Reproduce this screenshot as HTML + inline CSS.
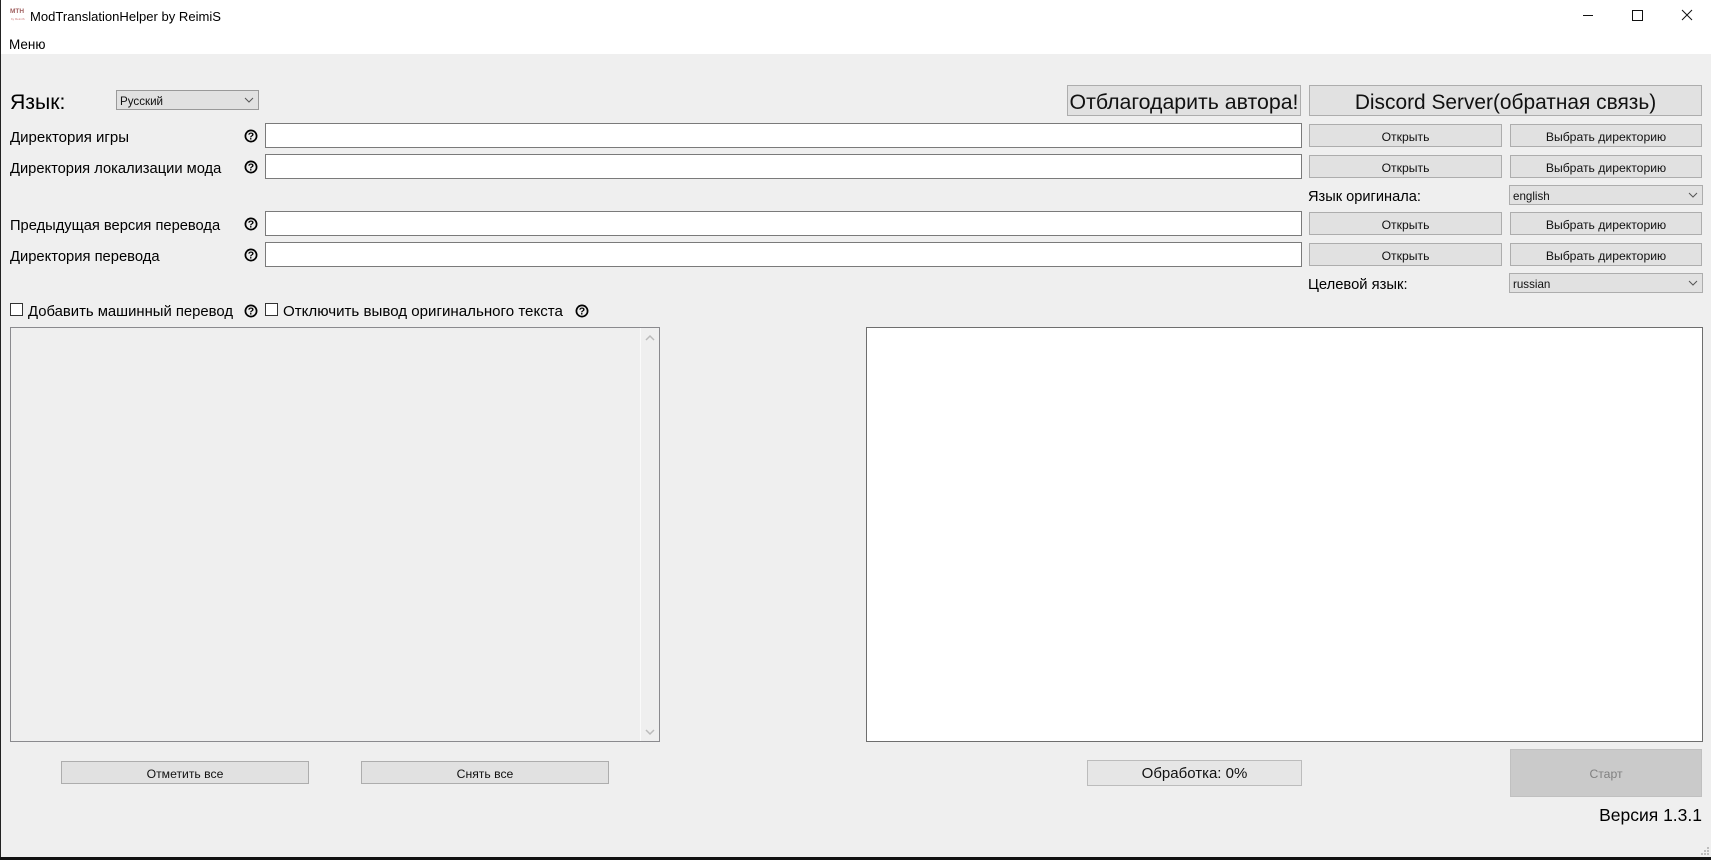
<!DOCTYPE html>
<html lang="ru">
<head>
<meta charset="utf-8">
<title>ModTranslationHelper by ReimiS</title>
<style>
html,body{margin:0;padding:0;width:1711px;height:860px;overflow:hidden;background:#efefef;font-family:"Liberation Sans",sans-serif;color:#000}
.a{position:absolute;box-sizing:border-box;white-space:nowrap}
.t{line-height:20px;height:20px;font-size:14.75px}
.b{background:#e1e1e1;border:1px solid #adadad;display:flex;align-items:center;justify-content:center;font-size:12.2px;color:#111;padding-top:2px}
.e{background:#fff;border:1px solid #7a7a7a}
.c{background:#e1e1e1;border:1px solid #adadad;font-size:11.6px;line-height:20px;padding-left:3px;color:#111}
.c span{position:relative;top:1px}
.c svg{position:absolute;right:4px;top:6px}
.k{background:#fff;border:1px solid #333;width:13px;height:13px}
.h{width:14px;height:14px}
</style>
</head>
<body>
<div class="a" style="left:0;top:0;width:1711px;height:54px;background:#fff"></div>
<div class="a" style="left:0;top:0;width:1px;height:860px;background:#222"></div>
<div class="a" style="left:0;top:857px;width:1711px;height:3px;background:#111"></div>

<div class="a" style="left:10px;top:8px;font-size:6.5px;line-height:7px;color:#a06060;font-weight:bold">MTH</div>
<div class="a" style="left:11px;top:17px;font-size:3px;line-height:4px;color:#c77">by ReimiS</div>
<div class="a t" style="left:30px;top:7px;font-size:13.05px;">ModTranslationHelper by ReimiS</div>
<div class="a t" style="left:9px;top:35px;font-size:13.5px;">Меню</div>

<svg class="a" style="left:1570px;top:0" width="141" height="30" fill="none" stroke="#111" stroke-width="1">
<path d="M13 15.5H23"/><rect x="62.5" y="10.5" width="10" height="10"/><path d="M112 10L122 20M122 10L112 20"/>
</svg>

<div class="a t" style="left:10px;top:91px;font-size:21.2px;line-height:24px;height:24px">Язык:</div>
<div class="a c" style="left:116px;top:90px;width:143px;height:20px;border-color:#999"><span>Русский</span><svg width="10" height="6" fill="none" stroke="#555"><path d="M1 1L5 5L9 1"/></svg></div>

<div class="a b" style="left:1067px;top:85px;width:234px;height:31px;font-size:21.3px;padding-top:3px">Отблагодарить автора!</div>
<div class="a b" style="left:1309px;top:85px;width:393px;height:31px;font-size:20.9px;padding-top:4px">Discord Server(обратная связь)</div>

<div class="a t" style="left:10px;top:128px;font-size:15px">Директория игры</div>
<div class="a t" style="left:10px;top:159px;font-size:14.7px">Директория локализации мода</div>
<div class="a t" style="left:10px;top:216px;font-size:14.7px">Предыдущая версия перевода</div>
<div class="a t" style="left:10px;top:247px">Директория перевода</div>

<svg class="a h" style="left:244px;top:129px" viewBox="0 0 14 14"><circle cx="7" cy="7" r="5.6" fill="none" stroke="#000" stroke-width="1.7"/><text x="7" y="10.7" font-size="10.5" font-weight="bold" text-anchor="middle" font-family="Liberation Sans">?</text></svg>
<svg class="a h" style="left:244px;top:160px" viewBox="0 0 14 14"><circle cx="7" cy="7" r="5.6" fill="none" stroke="#000" stroke-width="1.7"/><text x="7" y="10.7" font-size="10.5" font-weight="bold" text-anchor="middle" font-family="Liberation Sans">?</text></svg>
<svg class="a h" style="left:244px;top:217px" viewBox="0 0 14 14"><circle cx="7" cy="7" r="5.6" fill="none" stroke="#000" stroke-width="1.7"/><text x="7" y="10.7" font-size="10.5" font-weight="bold" text-anchor="middle" font-family="Liberation Sans">?</text></svg>
<svg class="a h" style="left:244px;top:248px" viewBox="0 0 14 14"><circle cx="7" cy="7" r="5.6" fill="none" stroke="#000" stroke-width="1.7"/><text x="7" y="10.7" font-size="10.5" font-weight="bold" text-anchor="middle" font-family="Liberation Sans">?</text></svg>

<div class="a e" style="left:265px;top:123px;width:1037px;height:25px"></div>
<div class="a e" style="left:265px;top:154px;width:1037px;height:25px"></div>
<div class="a e" style="left:265px;top:211px;width:1037px;height:25px"></div>
<div class="a e" style="left:265px;top:242px;width:1037px;height:25px"></div>

<div class="a b" style="left:1309px;top:124px;width:193px;height:23px">Открыть</div>
<div class="a b" style="left:1510px;top:124px;width:192px;height:23px">Выбрать директорию</div>
<div class="a b" style="left:1309px;top:155px;width:193px;height:23px">Открыть</div>
<div class="a b" style="left:1510px;top:155px;width:192px;height:23px">Выбрать директорию</div>
<div class="a b" style="left:1309px;top:212px;width:193px;height:23px">Открыть</div>
<div class="a b" style="left:1510px;top:212px;width:192px;height:23px">Выбрать директорию</div>
<div class="a b" style="left:1309px;top:243px;width:193px;height:23px">Открыть</div>
<div class="a b" style="left:1510px;top:243px;width:192px;height:23px">Выбрать директорию</div>

<div class="a t" style="left:1308px;top:187px;font-size:14.6px">Язык оригинала:</div>
<div class="a t" style="left:1308px;top:275px">Целевой язык:</div>
<div class="a c" style="left:1509px;top:185px;width:194px;height:20px"><span>english</span><svg width="10" height="6" fill="none" stroke="#555"><path d="M1 1L5 5L9 1"/></svg></div>
<div class="a c" style="left:1509px;top:273px;width:194px;height:20px"><span>russian</span><svg width="10" height="6" fill="none" stroke="#555"><path d="M1 1L5 5L9 1"/></svg></div>

<div class="a k" style="left:10px;top:303px"></div>
<div class="a t" style="left:28px;top:302px;font-size:14.85px">Добавить машинный перевод</div>
<svg class="a h" style="left:244px;top:304px" viewBox="0 0 14 14"><circle cx="7" cy="7" r="5.6" fill="none" stroke="#000" stroke-width="1.7"/><text x="7" y="10.7" font-size="10.5" font-weight="bold" text-anchor="middle" font-family="Liberation Sans">?</text></svg>
<div class="a k" style="left:265px;top:303px"></div>
<div class="a t" style="left:283px;top:302px;font-size:15.1px">Отключить вывод оригинального текста</div>
<svg class="a h" style="left:575px;top:304px" viewBox="0 0 14 14"><circle cx="7" cy="7" r="5.6" fill="none" stroke="#000" stroke-width="1.7"/><text x="7" y="10.7" font-size="10.5" font-weight="bold" text-anchor="middle" font-family="Liberation Sans">?</text></svg>

<div class="a" style="left:10px;top:327px;width:650px;height:415px;border:1px solid #8a8a8e;background:#efefef"></div>
<div class="a" style="left:640px;top:328px;width:1px;height:413px;background:#fafafa"></div>
<svg class="a" style="left:645px;top:334px" width="10" height="8" fill="none" stroke="#bbb" stroke-width="1.5"><path d="M1 6L5 2L9 6"/></svg>
<svg class="a" style="left:645px;top:728px" width="10" height="8" fill="none" stroke="#bbb" stroke-width="1.5"><path d="M1 2L5 6L9 2"/></svg>

<div class="a" style="left:866px;top:327px;width:837px;height:415px;border:1px solid #6e6e6e;background:#fff"></div>

<div class="a b" style="left:61px;top:761px;width:248px;height:23px">Отметить все</div>
<div class="a b" style="left:361px;top:761px;width:248px;height:23px">Снять все</div>
<div class="a b" style="left:1087px;top:760px;width:215px;height:26px;background:#e6e6e6;border-color:#bcbcbc;font-size:15px;padding-top:1px">Обработка: 0%</div>
<div class="a b" style="left:1510px;top:749px;width:192px;height:48px;background:#cacaca;border-color:#c0c0c0;color:#808080">Старт</div>
<div class="a t" style="left:1500px;top:804px;width:202px;text-align:right;font-size:17.5px;line-height:22px;height:22px">Версия 1.3.1</div>

<svg class="a" style="left:1700px;top:846px" width="11" height="11" fill="#bdbdbd"><rect x="7" y="1" width="2" height="2"/><rect x="4" y="4" width="2" height="2"/><rect x="7" y="4" width="2" height="2"/><rect x="1" y="7" width="2" height="2"/><rect x="4" y="7" width="2" height="2"/><rect x="7" y="7" width="2" height="2"/></svg>
</body>
</html>
